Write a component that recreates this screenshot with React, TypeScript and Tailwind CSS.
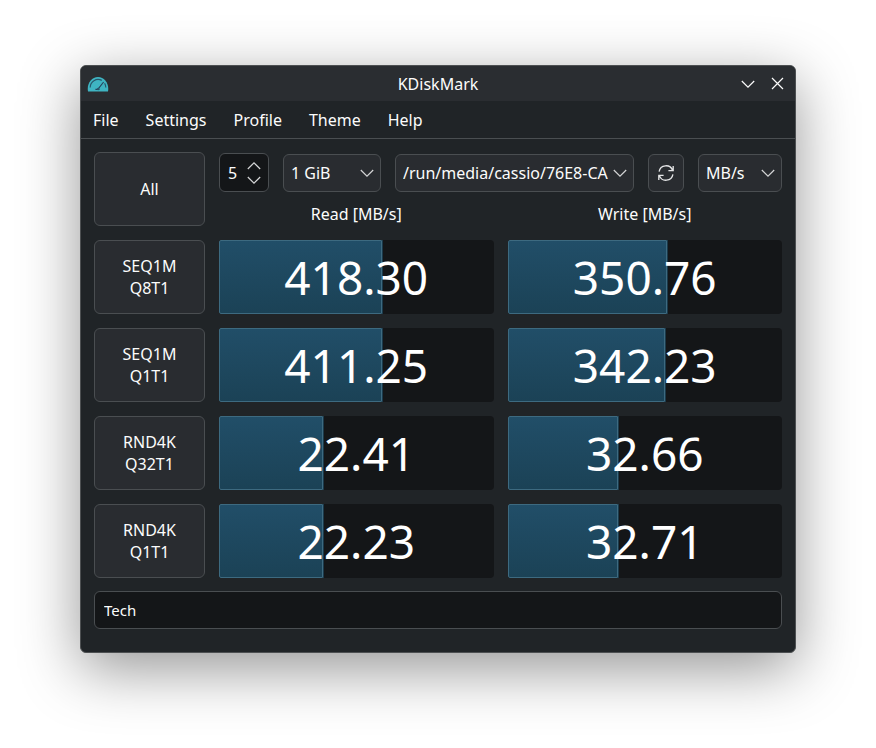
import { useState } from "react";

const menus = ["File", "Settings", "Profile", "Theme", "Help"];

const tests = [
  { name: "SEQ1M", queue: "Q8T1", read: "418.30", readFill: 59.5, write: "350.76", writeFill: 58 },
  { name: "SEQ1M", queue: "Q1T1", read: "411.25", readFill: 59.5, write: "342.23", writeFill: 57.3 },
  { name: "RND4K", queue: "Q32T1", read: "22.41", readFill: 38, write: "32.66", writeFill: 40.4 },
  { name: "RND4K", queue: "Q1T1", read: "22.23", readFill: 38, write: "32.71", writeFill: 40.4 },
];

function AppIcon() {
  return (
    <svg width="22" height="16" viewBox="0 0 22 16" fill="none" aria-hidden="true">
      <path d="M1 15.5C-0.4 7.6 4.4 1 11 1S22.4 7.6 21 15.5Z" fill="#3fb4c2" />
      <path d="M3.2 11.6A7.9 7.9 0 0 1 14.8 4.4M17.6 7.2A7.9 7.9 0 0 1 18.8 11.6" stroke="#27566a" strokeWidth="1.2" />
      <path d="M16.6 6L11.4 12.6M8.4 13.4H12.4" stroke="#27405a" strokeWidth="1.1" />
      <circle cx="11.2" cy="13" r="1.2" fill="#27566a" />
    </svg>
  );
}

function Chevron({ up = false }: { up?: boolean }) {
  return (
    <svg width="14" height="8" viewBox="0 0 14 8" fill="none" stroke="currentColor" strokeWidth="1.2" aria-hidden="true">
      <path d={up ? "M0.8 7L7 0.9L13.2 7" : "M0.8 1L7 7.1L13.2 1"} />
    </svg>
  );
}

function RefreshIcon() {
  return (
    <svg width="18" height="18" viewBox="0 0 18 18" fill="none" stroke="currentColor" strokeWidth="1.3" aria-hidden="true">
      <path d="M2.1 7.6A7 7 0 0 1 15.6 6.4M16.2 2V6.7H11.4" />
      <path d="M15.9 10.4A7 7 0 0 1 2.4 11.6M1.8 16V11.3H6.6" />
    </svg>
  );
}

function Combo({ label, options, className }: { label: string; options: string[]; className: string }) {
  return (
    <div className={`relative ${className}`}>
      <select
        aria-label={label}
        className="h-[38px] w-full appearance-none overflow-hidden rounded-md border border-[#4a4e51] bg-[#292c30] pl-[7px] pr-[22px] text-[#fcfcfc]"
      >
        {options.map((option) => (
          <option key={option}>{option}</option>
        ))}
      </select>
      <span className="pointer-events-none absolute inset-y-0 right-[7px] flex items-center text-[#d4d5d6]">
        <Chevron />
      </span>
    </div>
  );
}

function ResultBar({ label, value, fill }: { label: string; value: string; fill: number }) {
  return (
    <div
      role="progressbar"
      aria-label={label}
      aria-valuenow={fill}
      aria-valuetext={value}
      className="relative flex h-[74px] items-center justify-center rounded-sm bg-[#141618]"
    >
      <div
        className="absolute inset-y-0 left-0 rounded-l-xs border border-[#3d6a80] bg-linear-to-b from-[#214e68] to-[#1b4256] shadow-[1px_0_0_#1b3a4b]"
        style={{ width: `${fill}%` }}
      />
      <span className="relative text-[46px] leading-none text-white">{value}</span>
    </div>
  );
}

export default function App() {
  const [loops, setLoops] = useState(5);

  return (
    <div className="min-h-screen bg-white px-20 pt-[65px] pb-[95px] font-['Noto_Sans',sans-serif] text-base text-[#fcfcfc]">
      <div className="overflow-hidden rounded-md border border-[#4d5052] bg-[#202427] shadow-[0_16px_60px_rgba(0,0,0,0.42)]">
        {/* Title bar */}
        <header className="grid h-[35px] grid-cols-[1fr_auto_1fr] items-center bg-[#2a2d31] px-[6px]">
          <AppIcon />
          <h1>KDiskMark</h1>
          <div className="flex items-center justify-end gap-4 pr-[5px]">
            <button aria-label="Minimize">
              <Chevron />
            </button>
            <button aria-label="Close">
              <svg width="13" height="13" viewBox="0 0 13 13" stroke="currentColor" strokeWidth="1.2" aria-hidden="true">
                <path d="M1 1L12 12M12 1L1 12" />
              </svg>
            </button>
          </div>
        </header>

        {/* Menu bar */}
        <nav className="flex h-[38px] items-center gap-[27px] border-b border-[#4a4e51] px-[12px]">
          {menus.map((menu) => (
            <button key={menu}>{menu}</button>
          ))}
        </nav>

        <main className="flex flex-col gap-[13px] px-[13px] pt-[13px] pb-[23px]">
          <div className="grid grid-cols-[111px_1fr_1fr] gap-[14px]">
            <button className="h-[74px] rounded-md border border-[#4a4e51] bg-[#292c30]">All</button>
            <div className="col-span-2 flex flex-col justify-between">
              <div className="flex items-center gap-[14px] pt-px">
                <div className="flex h-[39px] w-[50px] items-center justify-between rounded-md border border-[#4a4e51] bg-[#141618] pr-[7px] pl-2">
                  <input
                    type="number"
                    aria-label="Loops"
                    value={loops}
                    onChange={(e) => setLoops(Number(e.target.value))}
                    className="w-3 [appearance:textfield] bg-transparent outline-none [&::-webkit-inner-spin-button]:appearance-none"
                  />
                  <div className="flex flex-col gap-[6px] text-[#d4d5d6]">
                    <button aria-label="Increase" className="block" onClick={() => setLoops(loops + 1)}>
                      <Chevron up />
                    </button>
                    <button aria-label="Decrease" className="block" onClick={() => setLoops(Math.max(1, loops - 1))}>
                      <Chevron />
                    </button>
                  </div>
                </div>
                <Combo label="Size" options={["1 GiB"]} className="w-[98px]" />
                <Combo label="Target" options={["/run/media/cassio/76E8-CA"]} className="min-w-0 flex-1" />
                <button
                  aria-label="Refresh"
                  className="flex h-[38px] w-9 items-center justify-center rounded-md border border-[#4a4e51] bg-[#292c30] text-[#e4e5e6]"
                >
                  <RefreshIcon />
                </button>
                <Combo label="Unit" options={["MB/s"]} className="w-[84px]" />
              </div>
              <div className="grid grid-cols-2 gap-[14px] text-center leading-6">
                <span>Read [MB/s]</span>
                <span>Write [MB/s]</span>
              </div>
            </div>

            {tests.map((test) => (
              <div key={test.name + test.queue} className="col-span-3 grid grid-cols-subgrid">
                <button className="h-[74px] rounded-md border border-[#4a4e51] bg-[#292c30] leading-[22px]">
                  {test.name}
                  <br />
                  {test.queue}
                </button>
                <ResultBar label={`${test.name} ${test.queue} read`} value={test.read} fill={test.readFill} />
                <ResultBar label={`${test.name} ${test.queue} write`} value={test.write} fill={test.writeFill} />
              </div>
            ))}
          </div>

          <input
            aria-label="Status"
            defaultValue="Tech"
            className="h-[38px] rounded-md border border-[#4a4e51] bg-[#141618] px-[9px] text-[15px] outline-none"
          />
        </main>
      </div>
    </div>
  );
}
